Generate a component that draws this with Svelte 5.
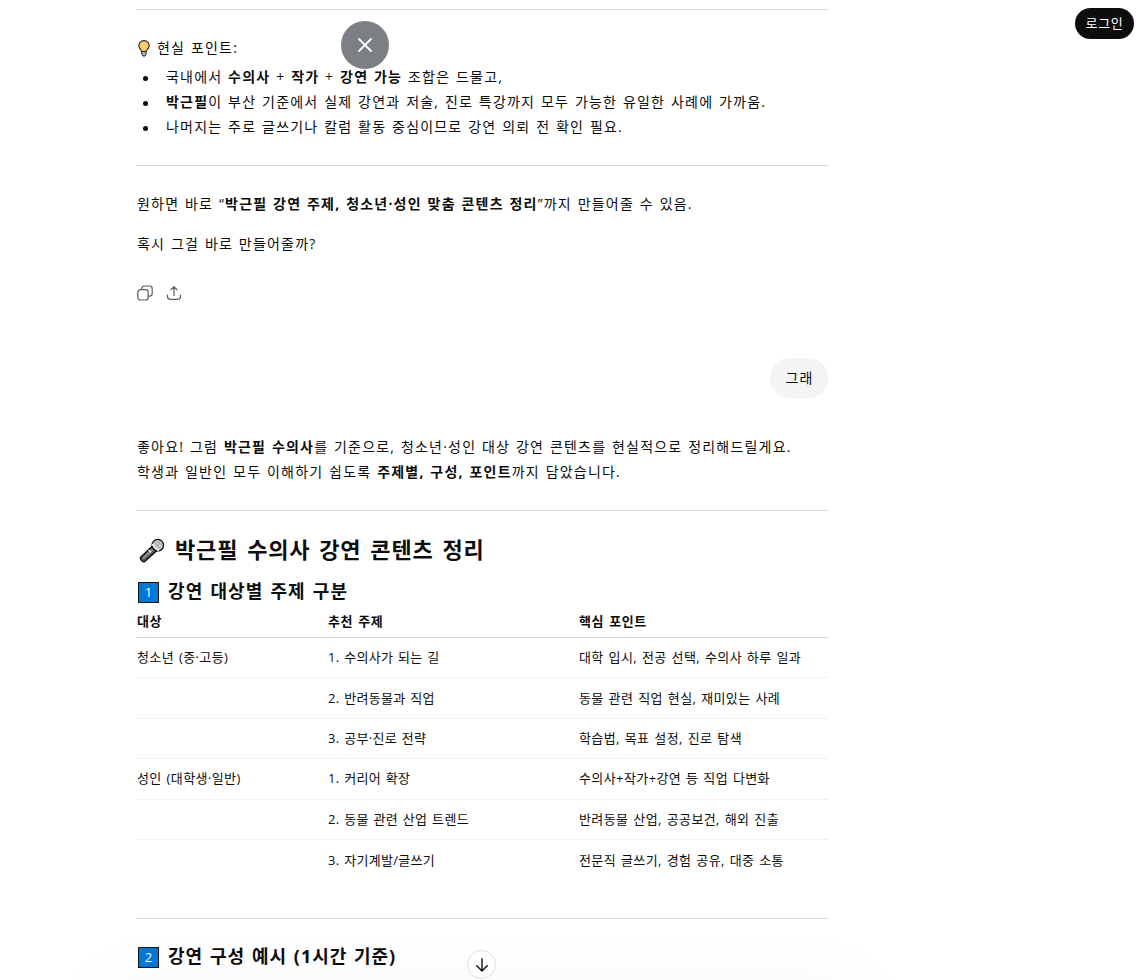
<script>
    const rows = [
        ['청소년 (중·고등)', '1. 수의사가 되는 길', '대학 입시, 전공 선택, 수의사 하루 일과'],
        ['', '2. 반려동물과 직업', '동물 관련 직업 현실, 재미있는 사례'],
        ['', '3. 공부·진로 전략', '학습법, 목표 설정, 진로 탐색'],
        ['성인 (대학생·일반)', '1. 커리어 확장', '수의사+작가+강연 등 직업 다변화'],
        ['', '2. 동물 관련 산업 트렌드', '반려동물 산업, 공공보건, 해외 진출'],
        ['', '3. 자기계발/글쓰기', '전문직 글쓰기, 경험 공유, 대중 소통'],
    ];
</script>

<div class="page">
    <main>
        <hr class="first" />
        <p class="point">
            <svg class="bulb" width="12" height="17" viewBox="0 0 12 17" aria-hidden="true">
                <path d="M4 11.8C4 9.8.8 9 .8 5.8a5.2 5.2 0 0 1 10.4 0C11.200 9 8 9.800 8 11.800z" fill="#ffcb6b" stroke="#222" stroke-width="1.1" />
                <path d="M4 11.600h4v3L7.100 16H4.900L4 14.600z" fill="#b8b8b8" stroke="#222" />
            </svg>
            <span>현실 포인트:</span>
        </p>
        <ul>
            <li>국내에서 <strong>수의사</strong> + <strong>작가</strong> + <strong>강연 가능</strong> 조합은 드물고,</li>
            <li><strong>박근필</strong>이 부산 기준에서 실제 강연과 저술, 진로 특강까지 모두 가능한 유일한 사례에 가까움.</li>
            <li>나머지는 주로 글쓰기나 칼럼 활동 중심이므로 강연 의뢰 전 확인 필요.</li>
        </ul>
        <hr />
        <p class="offer">원하면 바로 “<strong>박근필 강연 주제, 청소년·성인 맞춤 콘텐츠 정리</strong>”까지 만들어줄 수 있음.</p>
        <p class="ask">혹시 그걸 바로 만들어줄까?</p>

        <div class="actions">
            <button aria-label="복사">
                <svg width="16" height="16" viewBox="0 0 16 16">
                    <rect x=".8" y="4.6" width="10.4" height="10.4" rx="2.6" />
                    <path d="M4.8 4.4V3.7A2.7 2.7 0 0 1 7.5 1h5A2.7 2.7 0 0 1 15.2 3.7v4.8a2.7 2.7 0 0 1-2.7 2.7h-1.1" />
                </svg>
            </button>
            <button aria-label="공유">
                <svg width="16" height="16" viewBox="0 0 16 16">
                    <path d="M8 10.4V1.8M4.8 4.8 8 1.6l3.2 3.2M1.5 10v1.6a2.7 2.7 0 0 0 2.7 2.7h7.6a2.7 2.7 0 0 0 2.7-2.7V10" />
                </svg>
            </button>
        </div>

        <div class="user"><div class="bubble">그래</div></div>

        <p class="intro">
            좋아요! 그럼 <strong>박근필 수의사</strong>를 기준으로, 청소년·성인 대상 강연 콘텐츠를 현실적으로 정리해드릴게요.<br />
            학생과 일반인 모두 이해하기 쉽도록 <strong>주제별, 구성, 포인트</strong>까지 담았습니다.
        </p>
        <hr />
        <h2>
            <svg width="26" height="26" viewBox="0 0 26 26" aria-hidden="true">
                <path d="M14 7.5 1.4 19.6c-.5 1.4 2.3 4.7 4.1 4.2L18.5 12z" fill="#555" stroke="#111" stroke-width="1.4" />
                <path d="M13.8 9.6 3 19.7l1.7 1.8L15.5 11.4z" fill="#8a8a8a" />
                <circle cx="18.8" cy="7.2" r="5.8" fill="#c8c8c8" stroke="#111" stroke-width="1.3" />
                <path d="m13.4 6.6 6 6" stroke="#eee" stroke-width="1.5" />
                <path d="m9.9 12.5 1.8 1.4" stroke="#eee" stroke-width="1.4" />
                <path d="m16 5 5.5 5.5M18.5 3l4.5 4.5M21.3 4l-5 5" stroke="#999" stroke-width=".6" />
            </svg>
            <span>박근필 수의사 강연 콘텐츠 정리</span>
        </h2>
        <h3><i class="key">1</i><span>강연 대상별 주제 구분</span></h3>

        <table>
            <thead>
                <tr><th>대상</th><th>추천 주제</th><th>핵심 포인트</th></tr>
            </thead>
            <tbody>
                {#each rows as row}
                    <tr>
                        {#each row as cell}
                            <td>{cell}</td>
                        {/each}
                    </tr>
                {/each}
            </tbody>
        </table>
        <hr class="last" />
        <h3 class="next"><i class="key">2</i><span>강연 구성 예시 (1시간 기준)</span></h3>
    </main>

    <div class="composer"></div>
    <button class="login">로그인</button>
    <button class="close" aria-label="닫기">
        <svg width="14" height="14" viewBox="0 0 14 14"><path d="m1 1 12 12M13 1 1 13" /></svg>
    </button>
    <button class="down" aria-label="맨 아래로">
        <svg width="14" height="14" viewBox="0 0 14 14"><path d="M7 .7v12M1.8 7.7 7 12.9l5.2-5.2" /></svg>
    </button>
</div>

<style>
    :global(body) {
        background: #fff;
        overflow: hidden;
    }

    .page {
        position: relative;
        height: 980px;
        overflow: hidden;
        color: #0d0d0d;
        font-family: 'Open Sans', 'Noto Sans CJK KR', sans-serif;
        font-size: 14px;
        line-height: 25px;
        letter-spacing: 1.2px;
        word-spacing: 0.95px;
        white-space: nowrap;
    }

    main {
        width: 692px;
        margin-left: 136px;
    }

    p,
    h2,
    h3,
    ul {
        margin: 0;
        padding: 0;
    }

    hr {
        height: 1px;
        margin: 25px 0 0;
        border: 0;
        background: #d9d9d9;
    }

    hr.first {
        margin-top: 9px;
    }

    .point {
        display: flex;
        align-items: center;
        gap: 7px;
        height: 25px;
        padding: 26px 0 3px 2px;
    }

    .point span {
        margin-top: -2px;
    }

    ul {
        padding-bottom: 1px;
        list-style: none;
    }

    li {
        display: flex;
        align-items: center;
        height: 25px;
        white-space: pre;
    }

    li::before {
        content: '';
        width: 5px;
        height: 5px;
        margin: 3px 18px 0 7px;
        border-radius: 50%;
        background: #0d0d0d;
    }

    .offer {
        padding: 25px 0 0 1px;
    }

    .ask {
        padding: 15px 0 0 1px;
    }

    .intro {
        padding: 0 0 1px 1px;
    }

    button {
        display: flex;
        align-items: center;
        justify-content: center;
        padding: 0;
        border: 0;
        background: none;
        font-family: inherit;
        cursor: pointer;
    }

    svg {
        flex: none;
        stroke-linecap: round;
        stroke-linejoin: round;
    }

    .actions {
        display: flex;
        gap: 13px;
        padding: 29px 0 0 1px;
    }

    .actions svg {
        fill: none;
        stroke: #5d5d5d;
        stroke-width: 1.2;
    }

    .user {
        display: flex;
        justify-content: flex-end;
        padding: 57px 0 36px;
    }

    .bubble {
        box-sizing: border-box;
        width: 58px;
        height: 40px;
        padding-left: 1px;
        border-radius: 20px;
        background: #f4f4f4;
        line-height: 40px;
        text-align: center;
    }

    h2 {
        display: flex;
        align-items: center;
        gap: 10px;
        height: 30px;
        padding: 25px 0 0 3px;
        font-size: 22px;
        letter-spacing: 0.85px;
        word-spacing: 2.3px;
    }

    h2 span {
        margin-top: -4px;
    }

    h3 {
        display: flex;
        align-items: center;
        gap: 9px;
        height: 26px;
        padding: 13px 0 0 2px;
        font-size: 18px;
        letter-spacing: 1.1px;
        word-spacing: 1.3px;
    }

    h3 span {
        margin-top: -2px;
    }

    .next span {
        letter-spacing: 0.95px;
    }

    .key {
        box-sizing: border-box;
        width: 21px;
        height: 21px;
        border: 1.5px solid #151515;
        background: #0078d7;
        color: #fff;
        font: 13px/18px 'Open Sans', sans-serif;
        letter-spacing: 0;
        text-align: center;
    }

    table {
        width: 100%;
        border-collapse: separate;
        border-spacing: 0;
        table-layout: fixed;
        font-size: 13px;
        line-height: 20px;
        letter-spacing: 0.4px;
        word-spacing: 1.1px;
    }

    th {
        height: 33px;
        padding: 0 0 1px 1px;
        box-sizing: border-box;
        border-bottom: 1px solid #d9d9d9;
        letter-spacing: 0.6px;
        text-align: left;
    }

    th:nth-child(1) {
        width: 191px;
    }

    th:nth-child(2) {
        width: 251px;
    }

    td {
        box-sizing: border-box;
        height: 40.4px;
        padding: 0 0 1px 1px;
        border-bottom: 1px solid #f0f0f0;
    }

    td:nth-child(2) {
        letter-spacing: 0.3px;
    }

    tr:last-child td {
        border-bottom: 0;
    }

    hr.last {
        margin-top: 38px;
    }

    .next {
        padding-top: 25px;
    }

    /* input bar below the fold, only its shadow reaches the view */
    .composer {
        position: absolute;
        top: 984px;
        left: 98px;
        width: 768px;
        height: 56px;
        border-radius: 28px;
        box-shadow: 0 4px 80px 8px rgba(0, 0, 0, 0.03);
    }

    .login {
        position: absolute;
        top: 8px;
        right: 7px;
        width: 59px;
        height: 31px;
        padding-bottom: 3px;
        border-radius: 16px;
        background: #0d0d0d;
        color: #fff;
        font-size: 13px;
        letter-spacing: 0.7px;
    }

    .close {
        position: absolute;
        top: 21px;
        left: 341px;
        width: 48px;
        height: 48px;
        border-radius: 50%;
        background: #7c7f83;
    }

    .close svg {
        fill: none;
        stroke: #fff;
        stroke-width: 1.8;
    }

    .down {
        position: absolute;
        top: 950px;
        left: 467px;
        box-sizing: border-box;
        width: 29px;
        height: 29px;
        border: 1px solid #dedede;
        border-radius: 50%;
        background: #fff;
    }

    .down svg {
        fill: none;
        stroke: #0d0d0d;
        stroke-width: 1.4;
    }
</style>
